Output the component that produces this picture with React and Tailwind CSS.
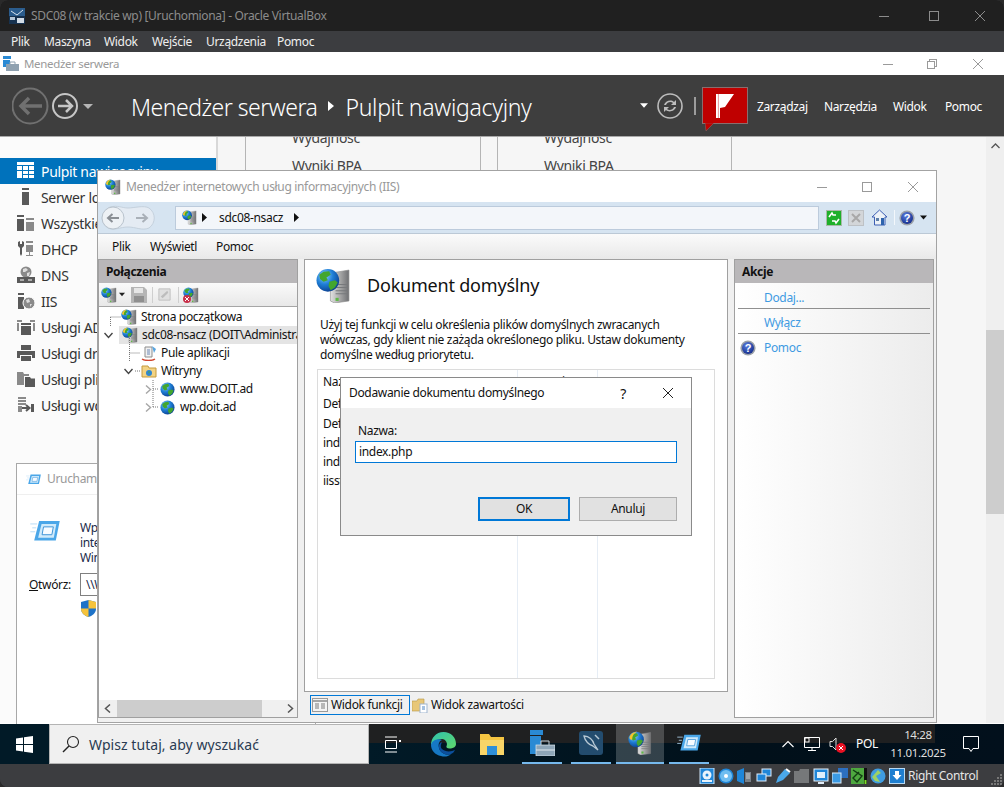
import React from "react";

const Globe = ({ x = 0, y = 0, r = 8, id }) => (
  <g>
    <defs>
      <radialGradient id={id} cx="35%" cy="30%" r="75%">
        <stop offset="0" stopColor="#8fd0ff" />
        <stop offset="0.5" stopColor="#1f7fd6" />
        <stop offset="1" stopColor="#0b3f8f" />
      </radialGradient>
    </defs>
    <circle cx={x} cy={y} r={r} fill={`url(#${id})`} />
    <path
      transform={`translate(${x - r} ${y - r}) scale(${r / 8})`}
      d="M5 2 9 1.5 10 4 7 6 8 8 5 9 2.5 7 2 4ZM9 9 13 8 15 9.5 13 13 10 15 8.5 12Z"
      fill="#43a62e"
    />
  </g>
);

const GlobeServer = ({ size = 16, id, className = "", warm }) => (
  <svg width={size} height={size} viewBox="0 0 34 34" className={className}>
    <defs>
      <linearGradient id={id + "s"} x1="0" x2="1">
        <stop offset="0" stopColor="#e2e2e2" />
        <stop offset="0.5" stopColor="#a9a9a9" />
        <stop offset="1" stopColor="#6f7073" />
      </linearGradient>
    </defs>
    <path d="M14 5 32 2V32L18 34 14 32Z" fill={`url(#${id}s)`} stroke="#8b8b8b" strokeWidth=".6" />
    <path d="M19 16H30M19 19H30M19 22H30M19 25H30" stroke="#77797c" strokeWidth="1" />
    <rect x="19" y="29" width="3" height="3" fill="#5fb947" />
    <Globe x={11.5} y={12} r={11} id={id + "g"} />
    {warm && <path d="M2 10C3 4 8 1 13 1 9 3 6 6 6 12 4 13 3 12 2 10Z" fill="#f5c32c" />}
  </svg>
);

const Help = ({ size = 16 }) => (
  <svg width={size} height={size} viewBox="0 0 16 16">
    <defs>
      <radialGradient id={"hp" + size} cx="40%" cy="30%" r="70%">
        <stop offset="0" stopColor="#5a7fe0" />
        <stop offset="1" stopColor="#17308f" />
      </radialGradient>
    </defs>
    <circle cx="8" cy="8" r="7.6" fill="#9aa0a8" />
    <circle cx="8" cy="8" r="6" fill={`url(#hp${size})`} />
    <text x="8" y="12" textAnchor="middle" fontSize="11" fontWeight="700" fill="#fff" fontFamily="Liberation Sans">?</text>
  </svg>
);

const WinCtl = ({ kind, color = "#9a9a9a", size = 10 }) => (
  <svg width={size} height={size} viewBox="0 0 10 10" fill="none" stroke={color} strokeWidth="1" shapeRendering="crispEdges">
    {kind === "min" && <path d="M0 5.5H10" />}
    {kind === "max" && <rect x=".5" y=".5" width="9" height="9" />}
    {kind === "res" && <path d="M.5 2.5H7.5V9.5H.5ZM2.5 2.5V.5H9.5V7.5H7.5" />}
    {kind === "x" && <path d="M0 0 10 10M10 0 0 10" shapeRendering="auto" />}
  </svg>
);

const Tri = ({ className = "" }) => (
  <svg width="7" height="9" viewBox="0 0 7 9" className={className}><path d="M1 0 6 4.5 1 9Z" fill="#111" /></svg>
);

const Caret = ({ color = "#ddd", w = 9 }) => (
  <svg width={w} height="5" viewBox="0 0 9 5"><path d="M0 0H9L4.5 5Z" fill={color} /></svg>
);

const RunIcon = ({ size = 30 }) => (
  <svg width={size} height={size * 0.72} viewBox="0 0 30 22">
    <path d="M0 4H7M2 8H6M0 12H5" stroke="#b8dcf6" strokeWidth="1" />
    <path d="M9 1H30L26 21H4Z" fill="#4aa6e8" />
    <path d="M11.5 4H26.5L24 18H8Z" fill="#cfeafb" />
    <path d="M13.5 7H23.5L22 15H12Z" fill="#f7fbff" stroke="#3d93d6" />
  </svg>
);

const SideIcon = ({ k }) => {
  const c = "#595959";
  const l = "#8a8a8a";
  return (
    <svg width="18" height="18" viewBox="0 0 18 18">
      {k === "dash" && <path d="M0 0H17V3H0ZM0 4H5V8H0ZM6 4H11V8H6ZM12 4H17V8H12ZM0 9H5V16H0ZM6 9H11V12H6ZM12 9H17V12H12ZM6 13H11V16H6ZM12 13H17V16H12Z" fill="#fff" />}
      {k === "srv" && <path d="M5 0H12V2H5ZM5 4H12V17H5Z" fill={c} />}
      {k === "all" && <g><path d="M0 1H7V3H0ZM0 5H7V17H0Z" fill={c} /><path d="M9 4H17V6H9ZM9 8H17V17H9Z" fill={l} /></g>}
      {k === "dhcp" && <g><path d="M1 2 3 1V4H5V1L7 2V6L5 8V14L4 16 3 14V8L1 6Z" fill={c} /><path d="M9 1H16V3H9ZM9 5H16V12H9ZM12 12H13V15H16V16H9V15H12Z" fill={l} /></g>}
      {k === "dns" && <g><circle cx="9" cy="6" r="5.5" fill={l} /><path d="M6 3 9 2 11 4 8 6 6 6ZM10 7 13 6 12 10 10 10Z" fill="#ddd" /><path d="M0 11H18V17H0Z" fill={c} /><path d="M3 14H7M11 14H15" stroke="#fff" /></g>}
      {k === "iis" && <g><path d="M1 1H7V3H1ZM1 5H7V17H1Z" fill={c} /><circle cx="12" cy="11" r="6" fill={l} stroke="#fff" /><path d="M9 8 12 7 13 10 10 11ZM13 12 15 12 13 15Z" fill="#ddd" /></g>}
      {k === "ad" && <g><path d="M0 2H5V4H0ZM0 5H2V13H0ZM13 2H18V4H13ZM16 5H18V13H16Z" fill={l} /><path d="M4 5H14V7H4ZM4 8H14V17H4Z" fill={c} /></g>}
      {k === "print" && <g><path d="M4 1H14V6H4ZM0 7H18V14H15V11H3V14H0ZM4 12H14V17H4Z" fill={c} /></g>}
      {k === "files" && <g><path d="M0 2H6L7 4H12V6H7V15H0Z" fill={l} /><path d="M8 7H13L14 8.5H18V17H8Z" fill={c} /></g>}
      {k === "rem" && <g><path d="M1 1H9V3H1ZM1 4H9V6H1ZM1 7H9V9H1ZM1 10H5V16H1Z" fill={l} /><path d="M5 12H12M9 9l3.5 3L9 15" stroke={c} strokeWidth="2" fill="none" /><path d="M14 8H17V16H14Z" fill={c} /></g>}
    </svg>
  );
};

const sideItems = [
  ["dash", "Pulpit nawigacyjny", true],
  ["srv", "Serwer lokalny"],
  ["all", "Wszystkie serwery"],
  ["dhcp", "DHCP"],
  ["dns", "DNS"],
  ["iis", "IIS"],
  ["ad", "Usługi AD DS"],
  ["print", "Usługi drukowania"],
  ["files", "Usługi plików"],
  ["rem", "Usługi wdrażania"],
];

const SmCard = ({ w }) => (
  <div className={`h-full overflow-hidden border-x border-[#b5b5b5] bg-[#f6f6f6] pl-[46px] text-[14px] text-[#444] ${w}`}>
    <div className="mt-[-9px] h-[28px] leading-[19px]">Wydajność</div>
    <div className="leading-[19px]">Wyniki BPA</div>
  </div>
);

const TreeRow = ({ pl, icon, text, sel, chevron, chevX }) => (
  <div className={`relative flex h-[18px] items-center overflow-hidden whitespace-nowrap ${pl}`}>
    {sel && <div className="absolute inset-y-0 left-[20px] right-0 bg-[#e4e4e4]" />}
    {chevron && <span className="absolute flex" style={{ left: chevX }}>{chevron}</span>}
    <span className="relative flex w-[20px] shrink-0 items-center">{icon}</span>
    <span className="relative text-[12px] text-[#111]">{text}</span>
  </div>
);

const ChevDown = () => (
  <svg width="9" height="7" viewBox="0 0 9 7" fill="none" stroke="#444" strokeWidth="1.4"><path d="M.5 1 4.5 5.5 8.5 1" /></svg>
);
const ChevRight = () => (
  <svg width="7" height="9" viewBox="0 0 7 9" fill="none" stroke="#a6a6a6" strokeWidth="1.4"><path d="M1 .5 5.5 4.5 1 8.5" /></svg>
);

const Folder = ({ size = 16 }) => (
  <svg width={size} height={size} viewBox="0 0 16 16">
    <path d="M1 3H7L8 5H15V14H1Z" fill="#f2d384" stroke="#c59a3d" />
    <circle cx="8" cy="10" r="3" fill="#2f86d0" /><path d="M7 8.5 9 8.5 8 10.5Z" fill="#4aa83a" />
  </svg>
);

const SmallGlobe = ({ id }) => (
  <svg width="15" height="15" viewBox="0 0 16 16"><Globe x={8} y={8} r={7.5} id={id} /></svg>
);

const PoolIcon = () => (
  <svg width="16" height="16" viewBox="0 0 16 16">
    <path d="M4 2H11V12H4Z" fill="#f1f1f1" stroke="#8d8d8d" />
    <path d="M6 5H9M6 7H9M6 9H9" stroke="#6d88b5" />
    <path d="M1 14C4 16 11 16 14 14" stroke="#d0442d" strokeWidth="1.4" fill="none" />
    <path d="M11 1 15 4 13 8Z" fill="#58a5e0" />
  </svg>
);

const Status = ({ k }) => {
  const b = "#1f86d8";
  const w = "#e8f3fc";
  return (
    <svg width="16" height="16" viewBox="0 0 16 16">
      {k === "hdd" && <g><rect x="1" y="0" width="14" height="16" fill={b} stroke="#cfe6f8" /><circle cx="8" cy="7" r="4.5" fill={w} /><circle cx="8" cy="7" r="1.5" fill={b} /><rect x="3" y="12" width="10" height="2" fill={w} /></g>}
      {k === "cd" && <g><circle cx="8" cy="8" r="7.5" fill={b} /><circle cx="8" cy="8" r="6" fill="#6fbdf0" /><circle cx="8" cy="8" r="2" fill="#fff" /></g>}
      {k === "aud" && <g><path d="M0 3 7 0V16L0 13Z" fill={b} /><path d="M8 4H14V14H8Z" fill="#7a8086" /><path d="M9 6H13M9 8H13M9 10H13" stroke="#ccc" /></g>}
      {k === "net" && <g><rect x="6" y="1" width="9" height="7" fill={b} stroke="#e2eefa" /><rect x="1" y="6" width="9" height="7" fill={b} stroke="#e2eefa" /></g>}
      {k === "usb" && <g><path d="M1 15 3 9 10 1 15 5 8 12Z" fill="#4aa8ea" /><path d="M11 1 15 4" stroke="#fff" strokeWidth="2" /></g>}
      {k === "folder" && <path d="M0 3H5L6 1H15V15H0Z" fill="#76787a" />}
      {k === "disp" && <g><rect x="1" y="1" width="14" height="12" fill={b} stroke="#eaf4fc" /><rect x="4" y="4" width="8" height="6" fill="#dff0fc" /><path d="M5 15H11" stroke="#e2eefa" strokeWidth="2" /></g>}
      {k === "cap" && <g><rect x="6" y="0" width="10" height="10" fill="#2c6fc0" /><rect x="0" y="5" width="9" height="10" fill="#3b9ae4" stroke="#dcecf8" /></g>}
      {k === "cpu" && <g><rect x="0" y="0" width="13" height="16" fill="#4ea83f" /><path d="M2 2 11 8 6 14 2 10 8 4" stroke="#123d12" fill="none" strokeWidth="1.4" /><rect x="13" y="0" width="3" height="16" fill="#101010" /><rect x="13.5" y="12" width="2" height="4" fill="#7fe02a" /></g>}
      {k === "gal" && <g><circle cx="8" cy="8" r="7.5" fill="#3f9ce0" /><path d="M2 9 8 2 11 5 6 8 10 14 5 13Z" fill="#9ed264" /></g>}
      {k === "arr" && <g><rect x=".5" y=".5" width="15" height="15" fill="#1f7fd0" stroke="#b8d9f2" /><path d="M8 12 3.500 7H6V3H10V7H12.500Z" fill="#fff" /></g>}
    </svg>
  );
};

export default function App() {
  return (
    <div className="h-[787px] w-[1004px] bg-[#2a2a2a]">
    <div className="relative flex h-[787px] w-[1004px] flex-col overflow-hidden rounded-[8px] bg-[#3c3d40] font-['Noto_Sans',sans-serif] text-[12px] tracking-[-0.33px]">
      {/* VirtualBox title */}
      <div className="flex h-[31px] shrink-0 items-center bg-[#202020] pl-[9px] text-[#8c8c8c]">
        <svg width="16" height="16" viewBox="0 0 16 16">
          <rect width="16" height="16" fill="#2b5c8c" />
          <rect y="8" width="16" height="8" fill="#17324f" />
          <path d="M2 3 8 7 14 2" stroke="#d8e4ee" fill="none" />
          <rect x="8" y="10" width="7" height="5" fill="#d4dde6" />
          <rect x="1" y="9" width="5" height="3" fill="#b3c5d6" />
        </svg>
        <span className="ml-[6px]">SDC08 (w trakcie wp) [Uruchomiona] - Oracle VirtualBox</span>
        <div className="ml-auto flex items-center pr-[19px]">
          <WinCtl kind="min" color="#8c8c8c" />
          <div className="ml-[40px]"><WinCtl kind="max" color="#8c8c8c" /></div>
          <div className="ml-[36px]"><WinCtl kind="x" color="#8c8c8c" /></div>
        </div>
      </div>
      {/* VirtualBox menu */}
      <div className="flex h-[21px] shrink-0 items-center bg-[#3c3d40] pl-[11px] text-[#efefef]">
        <span className="w-[33px]">Plik</span>
        <span className="w-[60px]">Maszyna</span>
        <span className="w-[48px]">Widok</span>
        <span className="w-[54px]">Wejście</span>
        <span className="w-[71px]">Urządzenia</span>
        <span>Pomoc</span>
      </div>

      {/* Guest screen */}
      <div className="relative h-[672px] shrink-0 overflow-hidden bg-white">
        {/* Server manager title */}
        <div className="flex h-[23px] items-center bg-white pl-[3px] text-[#9a9a9a]">
          <svg width="16" height="16" viewBox="0 0 16 16">
            <rect x="0" y="0" width="8" height="3" fill="#2a8ad4" />
            <rect x="0" y="4" width="7" height="7" fill="#2a8ad4" />
            <rect x="3" y="8" width="13" height="7" fill="#8fa1b0" />
            <path d="M7 8V6H12V8" stroke="#8fa1b0" fill="none" />
          </svg>
          <span className="ml-[5px] text-[11.5px]">Menedżer serwera</span>
          <div className="ml-auto flex items-center pr-[21px]">
            <WinCtl kind="min" />
            <div className="ml-[34px]"><WinCtl kind="res" /></div>
            <div className="ml-[36px]"><WinCtl kind="x" /></div>
          </div>
        </div>
        {/* Server manager header */}
        <div className="flex h-[62px] items-center border-b border-[#a9a9a9] bg-[#3e3e3e] pl-[12px] text-white">
          <svg width="84" height="40" viewBox="0 0 84 40">
            <circle cx="18" cy="20" r="17.5" fill="none" stroke="#707070" strokeWidth="2" />
            <path d="M30 20H9M17 12 9 20 17 28" fill="none" stroke="#707070" strokeWidth="3.5" />
            <circle cx="53" cy="20" r="12" fill="none" stroke="#c6c6c6" strokeWidth="2" />
            <path d="M46 20H60M54 14 60 20 54 26" fill="none" stroke="#c6c6c6" strokeWidth="2.5" />
            <path d="M71 18H81L76 23Z" fill="#b5b5b5" />
          </svg>
          <span className="ml-[35px] mt-[3px] text-[23px] font-light tracking-[-0.5px]">Menedżer serwera</span>
          <svg className="ml-[11px]" width="6" height="10" viewBox="0 0 6 10"><path d="M0 0 6 5 0 10Z" fill="#fff" /></svg>
          <span className="ml-[11px] mt-[3px] text-[23px] font-light tracking-[-0.3px]">Pulpit nawigacyjny</span>
          <div className="ml-auto flex items-center">
            <Caret color="#fff" w={8} />
            <svg className="ml-[9px]" width="26" height="26" viewBox="0 0 26 26" fill="none">
              <circle cx="13" cy="13" r="12" stroke="#bcbcbc" strokeWidth="1.6" />
              <path d="M7 12C8 8 14 6 17 9L19 7V12H14L16 10C14 8 10 9 9 12ZM19 14C18 18 12 20 9 17L7 19V14H12L10 16C12 18 16 17 17 14Z" fill="#bcbcbc" />
            </svg>
            <div className="ml-[11px] h-[18px] w-[2px] bg-[#9c9c9c]" />
            <div className="relative ml-[6px] mt-[6px] h-[43px] w-[46px]">
              <div className="flex h-[37px] w-[46px] items-center justify-center border border-[#8a6d6d] bg-[#bf0000]">
                <svg width="20" height="24" viewBox="0 0 20 24"><path d="M1 0H5V24H1ZM5 0H19L10 13 5 14Z" fill="#fff" /><path d="M3.4 0V24" stroke="#e59b9b" /></svg>
              </div>
              <svg className="absolute left-[3px] top-[36px]" width="9" height="8" viewBox="0 0 9 8"><path d="M0 0H9L1 8Z" fill="#bf0000" stroke="#8a6d6d" strokeWidth=".5" /></svg>
            </div>
            <div className="ml-[9px] mt-[3px] flex pr-[22px] text-[12px]">
              <span className="w-[67px]">Zarządzaj</span>
              <span className="w-[69px]">Narzędzia</span>
              <span className="w-[52px]">Widok</span>
              <span>Pomoc</span>
            </div>
          </div>
        </div>
        {/* Server manager body */}
        <div className="flex h-[586px]">
          <div className="w-[218px] shrink-0 border-r-2 border-[#d8d8d8] bg-[#fbfbfb] pt-[21px]">
            {sideItems.map(([k, t, a]) => (
              <div key={k} className={`flex h-[26px] items-center overflow-hidden whitespace-nowrap pl-[17px] text-[14px] ${a ? "bg-[#0072bc] text-white" : "text-[#333]"}`}>
                <SideIcon k={k} />
                <span className="ml-[6px]">{t}</span>
              </div>
            ))}
          </div>
          <div className="flex flex-1 overflow-hidden bg-[#f6f6f6] pl-[27px]">
            <SmCard w="w-[236px]" />
            <div className="ml-[16px]"><SmCard w="w-[235px]" /></div>
            <div className="ml-auto flex w-[18px] flex-col items-center bg-[#efefef]">
              <svg className="mt-[6px]" width="9" height="6" viewBox="0 0 9 6" fill="none" stroke="#555" strokeWidth="1.3"><path d="M.5 5 4.5 1 8.5 5" /></svg>
              <div className="mt-[181px] h-[184px] w-full bg-[#cdcdcd]" />
            </div>
          </div>
        </div>

        {/* Run dialog behind IIS */}
        <div className="absolute left-[16px] top-[411px] flex h-[270px] w-[300px] flex-col border border-[#a8a8a8] bg-white text-[#1b2a4a]">
          <div className="flex h-[31px] items-center border-b border-[#efefef] pl-[9px] text-[#999]">
            <RunIcon size={15} />
            <span className="ml-[6px]">Uruchamianie</span>
          </div>
          <div className="flex pl-[13px] pt-[25px]">
            <RunIcon />
            <div className="ml-[20px] leading-[15px]">
              <div>Wpisz ścieżkę</div>
              <div>internetową</div>
              <div>Windows</div>
            </div>
          </div>
          <div className="mt-[8px] flex items-center pl-[12px] text-[#111]">
            <span className="w-[51px]"><u>O</u>twórz:</span>
            <div className="flex h-[23px] w-[180px] items-center border border-[#808080] pl-[5px] text-[#1b2a4a]">\\WP</div>
          </div>
          <div className="ml-[64px] mt-[4px]">
            <svg width="15" height="17" viewBox="0 0 15 17">
              <path d="M7.5 0 15 2V9C15 13 11 16 7.5 17 4 16 0 13 0 9V2Z" fill="#1e73c8" />
              <path d="M7.5 0 15 2V8.5H7.5ZM7.5 8.5V17C4 16 0 13 0 9V8.5Z" fill="#f6c33b" />
            </svg>
          </div>
        </div>

        {/* IIS window */}
        <div className="absolute left-[97px] top-[118px] flex h-[553px] w-[840px] flex-col border border-[#a3a3a3] bg-[#f0f0f0]">
          <div className="flex h-[31px] shrink-0 items-center bg-white pl-[7px] text-[#999]">
            <GlobeServer size={16} id="t1" warm />
            <span className="ml-[5px]">Menedżer internetowych usług informacyjnych (IIS)</span>
            <div className="ml-auto flex items-center pr-[18px]">
              <WinCtl kind="min" />
              <div className="ml-[35px]"><WinCtl kind="max" /></div>
              <div className="ml-[36px]"><WinCtl kind="x" /></div>
            </div>
          </div>
          <div className="flex h-[32px] shrink-0 items-center border-b border-[#bcc9d6] bg-[#d6e4f1] pl-[2px]">
            <svg width="56" height="26" viewBox="0 0 56 26">
              <path d="M10 2C18 0 22 3 28 3S44 0 49 3C56 8 56 18 49 23 42 26 36 22 28 22S14 26 8 23C0 18 0 7 10 2Z" fill="#e4ebf3" stroke="#c4d0dc" />
              <circle cx="13" cy="13" r="11" fill="#edf1f5" stroke="#b9c3cd" />
              <path d="M19 13H8M12.5 9 8 13 12.5 17" fill="none" stroke="#8a8f95" strokeWidth="2" />
              <path d="M36 13H47M42.5 9 47 13 42.5 17" fill="none" stroke="#a9b0b8" strokeWidth="2" />
            </svg>
            <div className="ml-[19px] flex h-[24px] w-[644px] items-center border border-[#bccbdc] bg-[#f3f6fa] pl-[6px] text-[#111]">
              <GlobeServer size={15} id="t2" warm />
              <Tri className="ml-[4px]" />
              <span className="ml-[11px]">sdc08-nsacz</span>
              <Tri className="ml-[10px]" />
            </div>
            <div className="ml-[7px] flex items-center">
              <svg width="16" height="16" viewBox="0 0 16 16"><rect x=".5" y=".5" width="15" height="15" fill="#1eb02a" stroke="#a8b8a8" /><path d="M3 7 6 3 7 5H10M13 9 10 13 9 11H6" stroke="#fff" strokeWidth="1.6" fill="none" /></svg>
              <svg className="ml-[6px]" width="16" height="16" viewBox="0 0 16 16"><rect x=".5" y=".5" width="15" height="15" fill="#d3d6d9" stroke="#bdc1c5" /><path d="M4 4 12 12M12 4 4 12" stroke="#a8a8a8" strokeWidth="2" /></svg>
              <svg className="ml-[7px]" width="17" height="17" viewBox="0 0 17 17"><path d="M8.5 1 1 8H3.5V16H14V8H16Z" fill="#ecf1f6" stroke="#3d5fb4" /><rect x="10" y="9" width="3" height="7" fill="#2d63ad" /><rect x="5" y="9" width="3" height="3" fill="#5d7faa" /></svg>
              <div className="ml-[6px] h-[15px] w-[1px] bg-[#f3f7fb]" />
              <div className="ml-[4px]"><Help /></div>
              <div className="ml-[5px]"><Caret color="#111" w={7} /></div>
            </div>
          </div>
          <div className="flex h-[25px] shrink-0 items-center bg-[linear-gradient(#fbfbfb,#e9e9e9)] pl-[14px] text-[#111]">
            <span className="w-[38px]">Plik</span>
            <span className="w-[66px]">Wyświetl</span>
            <span>Pomoc</span>
          </div>
          <div className="flex min-h-0 flex-1 bg-[#f0f0f0] pb-[4px] pr-[2px]">
            {/* Connections */}
            <div className="flex w-[200px] shrink-0 flex-col border border-[#a0a0a0] bg-white">
              <div className="flex h-[23px] shrink-0 items-center bg-[#b9b7b9] pl-[7px] font-bold text-[#111]">Połączenia</div>
              <div className="flex h-[24px] shrink-0 items-center border-b border-[#a6a6a6] bg-[linear-gradient(#fafafa,#e8e8e8)] pl-[2px]">
                <GlobeServer size={16} id="t3" />
                <div className="ml-[2px]"><Caret color="#222" w={6} /></div>
                <svg className="ml-[6px]" width="16" height="16" viewBox="0 0 16 16"><path d="M0 0H13L16 3V16H0Z" fill="#b5b5b5" /><rect x="3" y="1" width="9" height="5" fill="#e6e6e6" /><rect x="3" y="9" width="10" height="6" fill="#8f8f8f" /></svg>
                <div className="ml-[5px] h-[16px] w-[1px] bg-[#cfcfcf]" />
                <svg className="ml-[4px]" width="15" height="15" viewBox="0 0 16 16"><path d="M2 2H14V14H2Z" fill="#e0e0e0" stroke="#bfbfbf" /><path d="M4 10 11 4 12 6 6 12Z" fill="#bdbdbd" /></svg>
                <div className="ml-[6px] h-[16px] w-[1px] bg-[#cfcfcf]" />
                <div className="relative ml-[4px]">
                  <GlobeServer size={16} id="t4" />
                  <svg className="absolute left-0 top-[8px]" width="8" height="8" viewBox="0 0 8 8"><circle cx="4" cy="4" r="4" fill="#c8314a" /><path d="M2 2 6 6M6 2 2 6" stroke="#fff" /></svg>
                </div>
              </div>
              <div className="relative min-h-0 flex-1 overflow-hidden pt-[1px]">
                <TreeRow pl="pl-[22px]" text="Strona początkowa" icon={<GlobeServer size={16} id="t5" warm />} />
                <TreeRow pl="pl-[23px]" sel text="sdc08-nsacz (DOIT\Administrator)" icon={<GlobeServer size={16} id="t6" warm />} chevron={<ChevDown />} chevX={5} />
                <TreeRow pl="pl-[42px]" text="Pule aplikacji" icon={<PoolIcon />} />
                <TreeRow pl="pl-[42px]" text="Witryny" icon={<Folder />} chevron={<ChevDown />} chevX={25} />
                <TreeRow pl="pl-[61px]" text="www.DOIT.ad" icon={<SmallGlobe id="g1" />} chevron={<ChevRight />} chevX={46} />
                <TreeRow pl="pl-[61px]" text="wp.doit.ad" icon={<SmallGlobe id="g2" />} chevron={<ChevRight />} chevX={46} />
                <svg className="absolute left-0 top-0" width="70" height="110" viewBox="0 0 70 110" fill="none" stroke="#777" strokeDasharray="1 1">
                  <path d="M11.5 10V20M11.5 10H22M30.5 29V55M30.5 46H41M36 64H41M54 73V100M54 82H60M54 100H60" />
                </svg>
              </div>
              <div className="flex h-[17px] shrink-0 items-center bg-[#f0f0f0]">
                <svg className="ml-[5px]" width="7" height="9" viewBox="0 0 7 9" fill="none" stroke="#555" strokeWidth="1.5"><path d="M6 .5 1.5 4.5 6 8.5" /></svg>
                <div className="ml-[6px] h-full w-[145px] bg-[#cdcdcd]" />
                <svg className="ml-[25px]" width="7" height="9" viewBox="0 0 7 9" fill="none" stroke="#555" strokeWidth="1.5"><path d="M1 .5 5.5 4.5 1 8.5" /></svg>
              </div>
            </div>
            {/* Center */}
            <div className="ml-[6px] flex w-[424px] shrink-0 flex-col">
              <div className="h-[433px] shrink-0 border border-[#a0a0a0] bg-white">
                <div className="flex h-[50px] items-center pl-[11px]">
                  <GlobeServer size={35} id="big" />
                  <span className="ml-[16px] text-[18px] tracking-[-0.2px] text-[#111]">Dokument domyślny</span>
                </div>
                <div className="ml-[15px] mt-[7px] whitespace-nowrap leading-[15px] text-[#111]">
                  <div>Użyj tej funkcji w celu określenia plików domyślnych zwracanych</div>
                  <div>wówczas, gdy klient nie zażąda określonego pliku. Ustaw dokumenty</div>
                  <div>domyślne według priorytetu.</div>
                </div>
                <div className="ml-[12px] mt-[7px] flex h-[310px] w-[398px] border border-[#dcdcdc] text-[#111]">
                  <div className="w-[200px] border-r border-[#e6edf5] pl-[5px] pt-[2px] leading-[19.3px]">
                    <div className="mb-[3px]">Nazwa</div>
                    <div>Default.htm</div>
                    <div>Default.asp</div>
                    <div>index.htm</div>
                    <div>index.html</div>
                    <div>iisstart.htm</div>
                  </div>
                  <div className="w-[80px] border-r border-[#e6edf5] pl-[6px] pt-[2px] leading-[19.3px]">Typ wpisu</div>
                </div>
              </div>
              <div className="flex items-center pl-[6px] pt-[3px] text-[#111]">
                <div className="flex h-[20px] w-[100px] items-center border border-[#0078d7] pl-[1px]">
                  <svg width="16" height="14" viewBox="0 0 16 14"><rect x=".5" y=".5" width="15" height="13" fill="#f4f4f4" stroke="#9a9a9a" /><path d="M1 3H15" stroke="#a5a5a5" strokeWidth="2" /><path d="M3 6H7M3 8H7M3 10H7M9 6H13M9 8H13M9 10H13" stroke="#7a7a7a" /></svg>
                  <span className="ml-[3px]">Widok funkcji</span>
                </div>
                <svg className="ml-[2px]" width="16" height="16" viewBox="0 0 16 16"><path d="M0 4H5L6 2H12V14H0Z" fill="#e8c778" stroke="#b79743" strokeWidth=".6" /><rect x="8" y="7" width="7" height="9" fill="#fff" stroke="#9fb5cf" /><path d="M10 10H13M10 12H13" stroke="#4a84c4" /></svg>
                <span className="ml-[3px]">Widok zawartości</span>
              </div>
            </div>
            {/* Actions */}
            <div className="ml-[6px] flex w-[200px] shrink-0 flex-col border border-[#a0a0a0] bg-[linear-gradient(90deg,#ffffff,#ececec)]">
              <div className="flex h-[23px] shrink-0 items-center bg-[#b9b7b9] pl-[7px] font-bold text-[#111]">Akcje</div>
              <div className="px-[3px] pt-[4px] text-[#3f9ae2]">
                <div className="flex h-[22px] items-center border-b border-[#8f8f8f] pl-[26px]">Dodaj...</div>
                <div className="mt-[3px] flex h-[22px] items-center border-b border-[#8f8f8f] pl-[26px]">Wyłącz</div>
                <div className="mt-[3px] flex h-[22px] items-center pl-[2px]">
                  <Help />
                  <span className="ml-[8px]">Pomoc</span>
                </div>
              </div>
            </div>
          </div>
        </div>

        {/* Dialog */}
        <div className="absolute left-[340px] top-[325px] flex h-[159px] w-[352px] flex-col border border-[#8a8a8a] bg-[#f0f0f0] text-[#111]">
          <div className="flex h-[30px] shrink-0 items-center bg-white pl-[8px]">
            <span>Dodawanie dokumentu domyślnego</span>
            <span className="ml-auto text-[14px]">?</span>
            <div className="ml-[37px] mr-[18px]"><WinCtl kind="x" color="#222" /></div>
          </div>
          <div className="pl-[17px] pt-[15px] leading-[15px]">Nazwa:</div>
          <div className="ml-[14px] mt-[3px] flex h-[22px] w-[322px] items-center border border-[#0078d7] bg-white pl-[3px]">index.php</div>
          <div className="mt-[34px] flex pl-[137px]">
            <div className="flex h-[24px] w-[92px] items-center justify-center border-2 border-[#0078d7] bg-[#e1e1e1]">OK</div>
            <div className="ml-[9px] flex h-[24px] w-[98px] items-center justify-center border border-[#adadad] bg-[#e1e1e1]">Anuluj</div>
          </div>
        </div>
      </div>

      {/* Taskbar */}
      <div className="flex h-[40px] shrink-0 items-center bg-[#011a27] text-white">
        <div className="flex h-full w-[49px] shrink-0 items-center justify-center">
          <svg width="17" height="17" viewBox="0 0 17 17"><path d="M0 2.4 7 1.4V8H0ZM8 1.2 17 0V8H8ZM0 9H7V15.6L0 14.6ZM8 9H17V17L8 15.8Z" fill="#fff" /></svg>
        </div>
        <div className="flex h-full w-[320px] shrink-0 items-center border border-[#b4b4b4] bg-[#f0f0f0] pl-[12px] text-[14px] tracking-[0.05px] text-[#2a3b52]">
          <svg width="18" height="18" viewBox="0 0 18 18" fill="none" stroke="#222" strokeWidth="1.1"><circle cx="11" cy="7" r="5.5" /><path d="M7 11 1 17" strokeWidth="1.4" /></svg>
          <span className="ml-[9px]">Wpisz tutaj, aby wyszukać</span>
        </div>
        <div className="relative flex h-full flex-1 items-center bg-[linear-gradient(90deg,#011a27,#01101a_60%,#02101c)]">
          <div className="absolute left-0 top-0 h-[19px] w-[566px] bg-[#1f2021]" />
          <svg className="relative ml-[15px]" width="17" height="17" viewBox="0 0 17 17" fill="none" stroke="#fff"><path d="M1 1H13M1 16H13M1.5 4.5H12.5V12.5H1.5Z" /><rect x="15" y="4" width="2" height="2" fill="#fff" stroke="none" /></svg>
          <svg className="relative ml-[30px]" width="25" height="25" viewBox="0 0 25 25">
            <defs>
              <linearGradient id="ed1" x1="0" y1="0" x2="1" y2="1"><stop offset="0" stopColor="#2fc2b0" /><stop offset="1" stopColor="#60d86a" /></linearGradient>
            </defs>
            <path d="M12.5 0C20 0 25 5 25 12 25 15 22 16.5 18.5 16.5 16 16.5 15 15.5 15.5 14 17 12 15 7 11 7 7 7 3 10 0 13 0 6 5 0 12.5 0Z" fill="url(#ed1)" />
            <path d="M0 13C1 8 7 6 11 8 8 9 7 12 8 16 9 20 14 24 20 22 17 25 13 25 10 24 4 23 0 18 0 13Z" fill="#1678c4" />
            <path d="M8 16C9 20 14 24 20 22 22 21 23 20 24 18 20 20 14 20 11 17 9 15 10 12 11 10 8.5 10.5 7.5 13 8 16Z" fill="#0c4f9c" />
          </svg>
          <svg className="relative ml-[24px]" width="24" height="22" viewBox="0 0 24 22">
            <path d="M0 1H9L11 4H24V22H0Z" fill="#f4c542" />
            <rect x="0" y="7" width="24" height="15" fill="#f8d568" />
            <rect x="7" y="13" width="10" height="9" fill="#2f8fd8" />
          </svg>
          <div className="relative ml-[18px] flex h-full w-[40px] items-center justify-center border-b-2 border-[#76b9ed]">
            <svg width="25" height="26" viewBox="0 0 25 26"><rect x="0" y="0" width="13" height="5" fill="#2a8ad4" /><rect x="0" y="6" width="11" height="18" fill="#2a8ad4" /><rect x="6" y="15" width="19" height="11" fill="#8ea6b8" stroke="#dfe8ee" strokeWidth=".7" /><path d="M11 15V11H19V15" stroke="#c8d4dd" fill="none" /><path d="M6 20H25" stroke="#dfe8ee" /></svg>
          </div>
          <div className="relative ml-[9px] flex h-full w-[40px] items-center justify-center border-b-2 border-[#76b9ed]">
            <svg width="24" height="24" viewBox="0 0 24 24"><rect width="24" height="24" rx="3" fill="#234c6e" /><path d="M5 5C10 5 14 9 15 13L19 19 14 15C10 14 6 10 5 5Z" fill="none" stroke="#b8c8d4" strokeWidth="1.3" /><path d="M16 4 20 8" stroke="#b8c8d4" strokeWidth="1.5" /></svg>
          </div>
          <div className="relative ml-[5px] flex h-full w-[48px] items-center justify-center border-b-2 border-[#76b9ed] bg-[#ffffff33]">
            <GlobeServer size={24} id="tb" warm />
          </div>
          <div className="relative ml-[5px] flex h-full w-[40px] items-center justify-center border-b-2 border-[#76b9ed]">
            <RunIcon size={24} />
          </div>
          <svg className="relative ml-[73px]" width="12" height="8" viewBox="0 0 12 8" fill="none" stroke="#fff" strokeWidth="1.1"><path d="M.5 7 6 1.500 11.500 7" /></svg>
          <svg className="relative ml-[10px]" width="16" height="14" viewBox="0 0 16 14" fill="none" stroke="#fff"><path d="M.5.5H15.500V10.500H.5ZM8 10.500V13.500M4 13.500H12" /><rect x="1" y="1" width="4" height="4" fill="#111" /></svg>
          <div className="relative ml-[9px]">
            <svg width="16" height="14" viewBox="0 0 16 14" fill="none" stroke="#ddd"><path d="M1 4.500H3.500L7 1V13L3.500 9.500H1Z" /></svg>
            <svg className="absolute left-[7px] top-[6px]" width="10" height="10" viewBox="0 0 10 10"><circle cx="5" cy="5" r="5" fill="#e81123" /><path d="M3 3 7 7M7 3 3 7" stroke="#fff" /></svg>
          </div>
          <span className="relative ml-[11px] w-[22px] whitespace-nowrap text-[12px]">POL</span>
          <div className="relative ml-[2px] flex w-[76px] flex-col items-center text-[11.5px] leading-[18px] text-[#dfdfdf]">
            <span>14:28</span>
            <span>11.01.2025</span>
          </div>
          <svg className="relative ml-[7px]" width="16" height="17" viewBox="0 0 16 17" fill="none" stroke="#fff"><path d="M.5.5H15.500V12.500H10L8 15.500 6 12.500H.5Z" /></svg>
        </div>
      </div>

      {/* VirtualBox status bar */}
      <div className="flex h-[23px] shrink-0 items-center bg-[#3c3d40] pl-[699px] text-[#e6e6e6]">
        <div className="flex items-center gap-[3px]">
          {["hdd", "cd", "aud", "net", "usb", "folder", "disp", "cap", "cpu", "gal", "arr"].map((k) => (
            <Status key={k} k={k} />
          ))}
        </div>
        <span className="ml-[3px] whitespace-nowrap">Right Control</span>
        <svg className="ml-auto mr-[2px] mt-[8px]" width="12" height="12" viewBox="0 0 12 12" fill="#777"><path d="M10 0h2v2h-2zM7 3h2v2H7zM10 3h2v2h-2zM4 6h2v2H4zM7 6h2v2H7zM10 6h2v2h-2zM1 9h2v2H1zM4 9h2v2H4zM7 9h2v2H7zM10 9h2v2h-2z" /></svg>
      </div>
    </div>
    </div>
  );
}
